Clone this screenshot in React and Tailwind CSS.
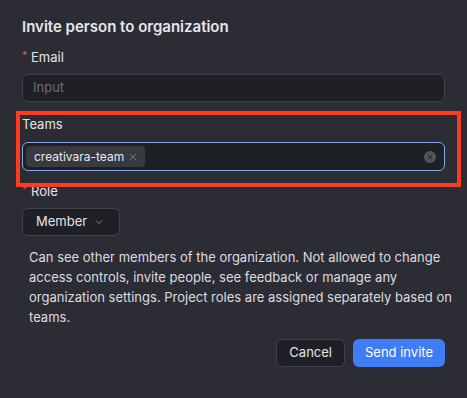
import { X, ChevronDown } from "lucide-react";

function Label({ children, required }) {
  return (
    <div className="flex items-center gap-1 text-[13px] text-[#e4e4e7] leading-5">
      {required && <span className="text-[#f0506e] text-[10px] -mt-1">*</span>}
      <span>{children}</span>
    </div>
  );
}

export default function App() {
  return (
    <div
      className="relative w-[467px] h-[398px] bg-[#2c2c35] overflow-hidden"
      style={{ fontFamily: "Inter, 'Noto Sans', sans-serif" }}
    >
      <div className="flex flex-col px-[22px] pt-[17px]">
        <h2 className="text-[15px] font-semibold text-[#e6e6ea] leading-5">
          Invite person to organization
        </h2>

        <div className="mt-[10px]">
          <Label required>Email</Label>
          <div className="mt-[7px] h-[28px] rounded-md border border-[#42424c] bg-[#1f1f26] flex items-center px-[10px] text-[13px] text-[#6c6c76]">
            Input
          </div>
        </div>

        <div className="mt-[12px]">
          <Label>Teams</Label>
          <div className="mt-[8px] h-[29px] rounded-md border border-[#86a9ec] bg-[#1f1f26] flex items-center pl-[3px] pr-[8px]">
            <span className="flex items-center gap-[3px] h-[21px] rounded bg-[#393940] pl-[8px] pr-[6px] text-[12px] text-[#e8e8ec]">
              creativara-team
              <X className="w-3 h-3 text-[#8a8a92]" strokeWidth={1.5} />
            </span>
            <span className="ml-auto w-[12px] h-[12px] rounded-full bg-[#55555c] flex items-center justify-center">
              <X className="w-[8px] h-[8px] text-[#1f1f26]" strokeWidth={3} />
            </span>
          </div>
        </div>

        <div className="mt-[10px]">
          <Label required>Role</Label>
          <button className="mt-[7px] h-[28px] pl-[13px] pr-[14px] rounded-md border border-[#42424c] bg-[#1f1f26] flex items-center gap-[6px] text-[13px] text-[#e4e4e7]">
            Member
            <ChevronDown className="w-[12px] h-[12px] text-[#a0a0a8]" strokeWidth={1.5} />
          </button>
        </div>

        <p className="mt-[11px] pl-[7px] -mr-[8px] text-[13px] leading-5 text-[#dcdce0]">
          Can see other members of the organization. Not allowed to change access controls, invite
          people, see feedback or manage any organization settings. Project roles are assigned
          separately based on teams.
        </p>

        <div className="mt-[12px] flex justify-end gap-[8px]">
          <button className="h-[28px] px-[12px] rounded-md border border-[#42424c] bg-[#1f1f26] text-[13px] text-[#e4e4e7]">
            Cancel
          </button>
          <button className="h-[28px] px-[12px] rounded-md bg-[#3f7cf6] text-[13px] text-white">
            Send invite
          </button>
        </div>
      </div>

      <div className="absolute left-[16px] top-[111px] w-[445px] h-[76px] border-[4px] border-[#ff3b1f] pointer-events-none" />
    </div>
  );
}
